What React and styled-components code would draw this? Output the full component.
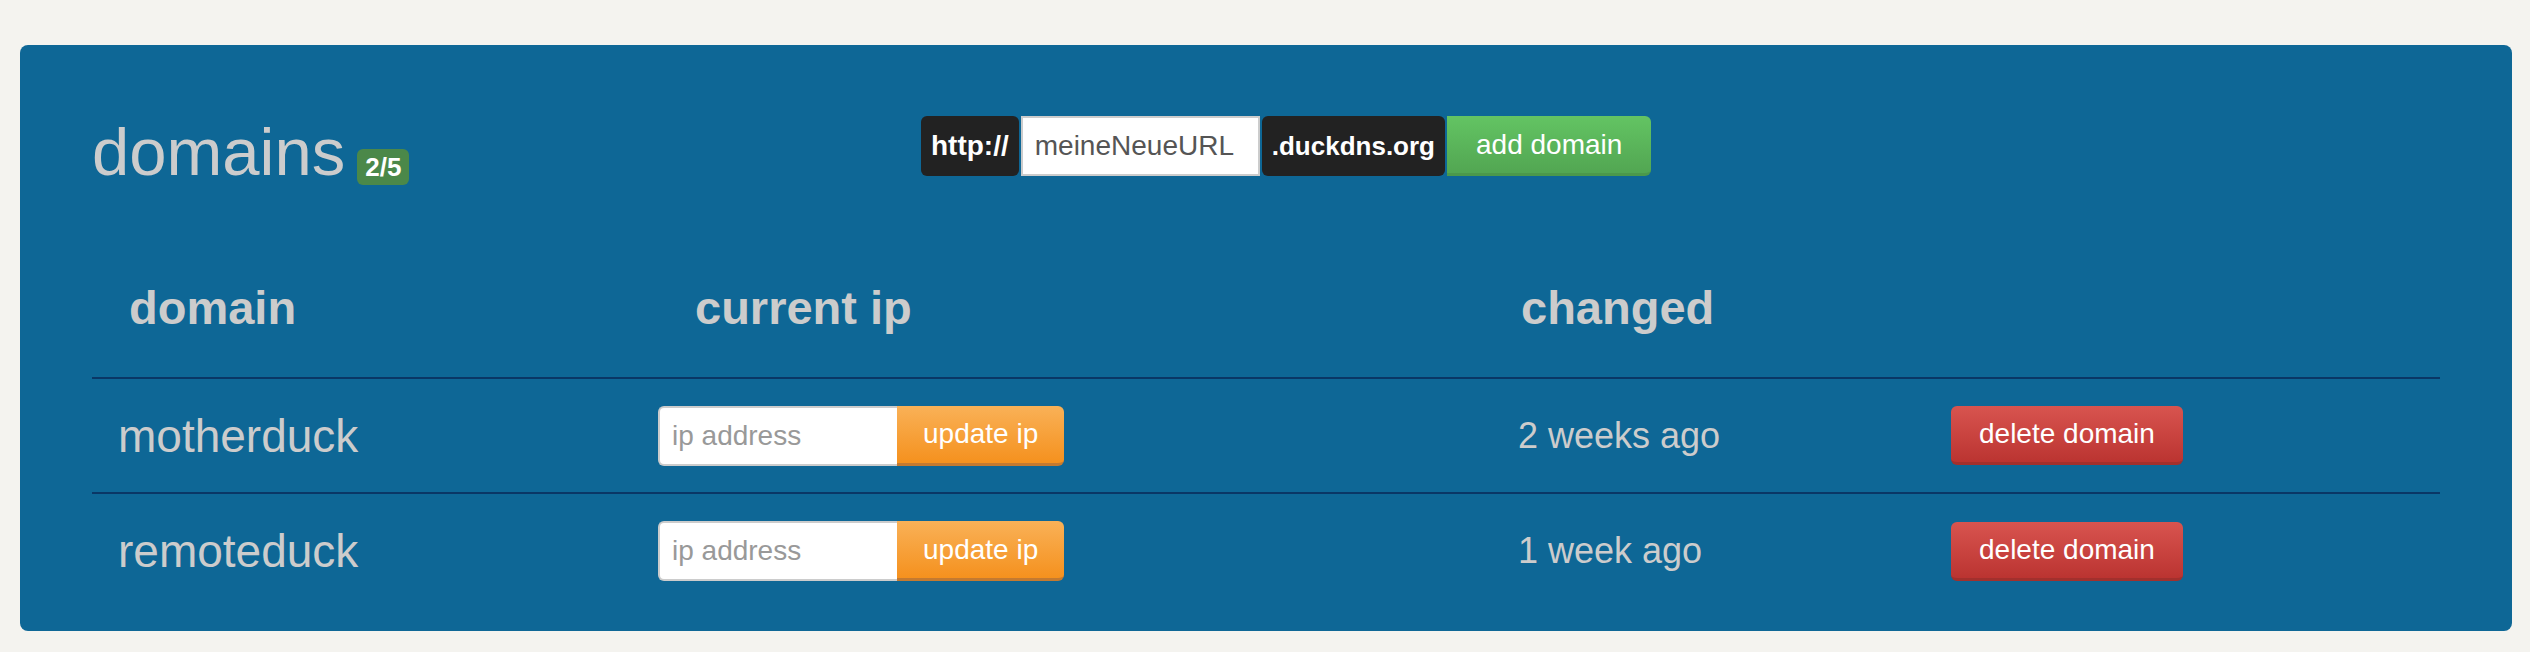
import React from "react";
import styled, { createGlobalStyle } from "styled-components";

const GlobalStyle = createGlobalStyle`
  body {
    margin: 0;
    background: #f4f3ef;
    font-family: "Liberation Sans", Arial, sans-serif;
  }
`;

const domains = [
    { name: "motherduck", changed: "2 weeks ago" },
    { name: "remoteduck", changed: "1 week ago" },
];

const columns = "548px 860px 433px 1fr";

function App() {
    return (
        <Page>
            <GlobalStyle />
            <Panel>
                <TopRow>
                    <Title>
                        <h1>domains</h1>
                        <Badge>2/5</Badge>
                    </Title>
                    <AddForm onSubmit={(e) => e.preventDefault()}>
                        <AddOn $size={28}>http://</AddOn>
                        <DomainInput defaultValue="meineNeueURL" />
                        <AddOn $size={26}>.duckdns.org</AddOn>
                        <Button $variant="success" $side="right">add domain</Button>
                    </AddForm>
                </TopRow>

                <HeadRow>
                    <HeadCell $indent={37}>domain</HeadCell>
                    <HeadCell $indent={55}>current ip</HeadCell>
                    <HeadCell $indent={21}>changed</HeadCell>
                    <div />
                </HeadRow>

                {domains.map((d, i) => (
                    <Row key={d.name} $last={i === domains.length - 1}>
                        <NameCell>{d.name}</NameCell>
                        <Cell>
                            <IpGroup>
                                <IpInput placeholder="ip address" />
                                <Button $variant="warning" $side="right">update ip</Button>
                            </IpGroup>
                        </Cell>
                        <ChangedCell>{d.changed}</ChangedCell>
                        <Cell>
                            <Button $variant="danger">delete domain</Button>
                        </Cell>
                    </Row>
                ))}
            </Panel>
        </Page>
    );
}

const Page = styled.div`
    padding: 45px 18px 0 20px;
`;

const Panel = styled.div`
    background: #0e6796;
    border-radius: 8px;
    padding: 70px 72px 23px 72px;
`;

const TopRow = styled.div`
    display: grid;
    grid-template-columns: 829px auto;
    align-items: start;
`;

const Title = styled.div`
    display: flex;
    align-items: flex-end;
    h1 {
        margin: 0;
        font-size: 67px;
        line-height: 74px;
        font-weight: 400;
        color: #cccccc;
    }
`;

const Badge = styled.span`
    margin: 0 0 4px 12px;
    height: 36px;
    line-height: 36px;
    padding: 0 8px;
    border-radius: 6px;
    background: #4b8849;
    color: #fff;
    font-size: 26px;
    font-weight: 700;
`;

const AddForm = styled.form`
    display: flex;
    gap: 2px;
    height: 60px;
    margin-top: 1px;
`;

const AddOn = styled.span`
    display: flex;
    align-items: center;
    padding: 0 10px;
    background: #222;
    border-radius: 6px;
    color: #fff;
    font-size: ${(p) => p.$size}px;
    font-weight: 700;
`;

const DomainInput = styled.input`
    box-sizing: border-box;
    width: 239px;
    height: 60px;
    border: 2px solid #cccccc;
    padding: 0 12px;
    font-family: inherit;
    font-size: 28px;
    color: #555;
    outline: none;
`;

const gradients = {
    success: ["#63c463", "#52a652", "#4b984b"],
    warning: ["#f9b157", "#f5911e", "#c47a30"],
    danger: ["#d8544f", "#bb3431", "#a2302d"],
};

const paddings = { success: 29, warning: 26, danger: 28 };

const Button = styled.button`
    box-sizing: border-box;
    height: ${(p) => (p.$side ? "60px" : "59px")};
    padding: 0 ${(p) => paddings[p.$variant]}px;
    border: none;
    border-bottom: 3px solid ${(p) => gradients[p.$variant][2]};
    border-radius: ${(p) => (p.$side === "right" ? "0 6px 6px 0" : "6px")};
    background: linear-gradient(${(p) => gradients[p.$variant][0]}, ${(p) => gradients[p.$variant][1]});
    color: #fff;
    font-family: inherit;
    font-size: 28px;
    cursor: pointer;
    white-space: nowrap;
`;

const HeadRow = styled.div`
    display: grid;
    grid-template-columns: ${columns};
    box-sizing: border-box;
    height: 190px;
    align-items: end;
    padding-bottom: 42px;
    border-bottom: 2px solid #0a3766;
`;

const HeadCell = styled.div`
    padding-left: ${(p) => p.$indent}px;
    font-size: 47px;
    line-height: 54px;
    font-weight: 700;
    color: #cccccc;
`;

const Row = styled.div`
    display: grid;
    grid-template-columns: ${columns};
    box-sizing: border-box;
    height: ${(p) => (p.$last ? "114px" : "115px")};
    align-items: center;
    border-bottom: ${(p) => (p.$last ? "none" : "2px solid #0a3766")};
`;

const Cell = styled.div`
    padding-left: 18px;
`;

const NameCell = styled.div`
    padding-left: 26px;
    font-size: 46px;
    color: #cccccc;
`;

const ChangedCell = styled(Cell)`
    font-size: 36px;
    color: #cccccc;
`;

const IpGroup = styled.div`
    display: flex;
    height: 60px;
`;

const IpInput = styled.input`
    box-sizing: border-box;
    width: 239px;
    height: 60px;
    border: 2px solid #cccccc;
    border-right: none;
    border-radius: 6px 0 0 6px;
    padding: 0 12px;
    font-family: inherit;
    font-size: 28px;
    color: #555;
    outline: none;
    &::placeholder {
        color: #999;
    }
`;

export default App;
